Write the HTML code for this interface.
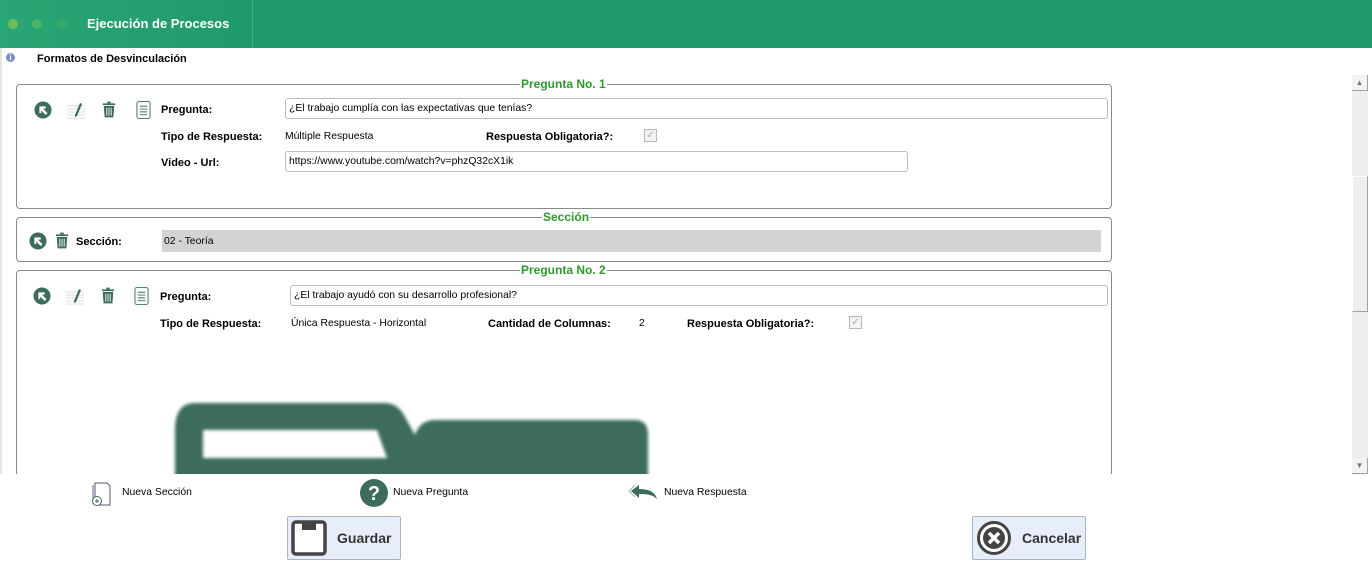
<!DOCTYPE html>
<html><head><meta charset="utf-8"><style>
*{margin:0;padding:0;box-sizing:border-box}
body{width:1372px;height:584px;background:#fff;font-family:"Liberation Sans",sans-serif;font-size:11px;color:#000;position:relative;overflow:hidden}
.a{position:absolute}
.n{font-size:10.4px}
.b{font-weight:bold}
.box{position:absolute;left:16px;width:1096px;border:1px solid #8a8a8a;border-radius:4px}
.leg{position:absolute;top:-8px;background:#fff;color:#2e9a2a;font-weight:bold;font-size:12px;padding:0 1px;line-height:14px}
.inp{position:absolute;border:1px solid #bdbdbd;border-radius:3px;height:21px;padding:4px 3px;font-size:10.4px;background:#fff}
.chk{position:absolute;width:13px;height:13px;border:1px solid #b8b8b8;background:#f2f2f2;color:#aaa;font-size:10px;line-height:11px;text-align:center}
.btn{position:absolute;border:1px solid #a9b3c4;border-radius:2px;background:#e7edf9;height:44px;font-size:14px;font-weight:bold;color:#333}
</style></head><body>
<div class="a" style="left:0;top:0;width:1372px;height:48px;background:#229a6c"></div>
<div class="a" style="left:0;top:0;width:252px;height:48px;background:linear-gradient(90deg,#2aa574,#209a6a)"></div>
<div class="a" style="left:252px;top:0;width:1px;height:48px;background:#3fb184"></div>
<div class="a" style="left:8px;top:19px;width:10px;height:10px;border-radius:50%;background:#6fbf58"></div>
<div class="a" style="left:32px;top:19px;width:10px;height:10px;border-radius:50%;background:#4db368"></div>
<div class="a" style="left:57px;top:19px;width:10px;height:10px;border-radius:50%;background:#36a86c"></div>
<div class="a b" style="left:87px;top:16px;color:#fff;font-size:13px">Ejecución de Procesos</div>
<div class="a" style="left:0;top:48px;width:2px;height:536px;background:#e6e6e6"></div>
<div class="a b" style="left:6px;top:53px;width:9px;height:9px;border-radius:50%;background:#7a8fd0;color:#fff;font-size:8px;line-height:9px;text-align:center">i</div>
<div class="a b" style="left:37px;top:53px">Formatos de Desvinculación</div>

<svg width="0" height="0" style="position:absolute"><defs>
<symbol id="go" viewBox="0 0 20 20"><circle cx="10" cy="10" r="9.5" fill="#3d6b5e"/><path d="M6 6h7v2.5h-3l5 5-2 2-5-5v3H6z" fill="#fff"/></symbol>
<symbol id="tr" viewBox="0 0 16 18"><rect x="1" y="2" width="14" height="2" fill="#3d6b5e"/><rect x="6" y="0" width="4" height="2" fill="#3d6b5e"/><path d="M2 5h12l-1 13H3z" fill="#3d6b5e"/><path d="M5.5 7v9M8 7v9M10.5 7v9" stroke="#fff" stroke-width="1"/></symbol>
<symbol id="ed" viewBox="0 0 20 20"><path d="M1 5h18M1 8h18M1 11h18M1 14h18M1 17h18" stroke="#ddd" stroke-width="1"/><path d="M14 2l2 1-5 12-2 1 0-2z" fill="#3d6b5e"/></symbol>
<symbol id="dc" viewBox="0 0 16 20"><rect x="1" y="1" width="14" height="18" rx="2" fill="#fff" stroke="#3d6b5e"/><path d="M4 6h8M4 9h8M4 12h8M4 15h8" stroke="#3d6b5e"/></symbol>
</defs></svg>

<div class="box" style="top:84px;height:125px">
<div class="leg" style="left:503px">Pregunta No. 1</div>
</div>
<svg class="a" style="left:34px;top:101px" width="18" height="18"><use href="#go"/></svg>
<svg class="a" style="left:66px;top:101px" width="20" height="20"><use href="#ed"/></svg>
<svg class="a" style="left:102px;top:101px" width="14" height="17"><use href="#tr"/></svg>
<svg class="a" style="left:136px;top:100px" width="15" height="20"><use href="#dc"/></svg>
<div class="a b" style="left:161px;top:104px">Pregunta:</div>
<div class="inp" style="left:285px;top:98px;width:823px">¿El trabajo cumplía con las expectativas que tenías?</div>
<div class="a b" style="left:161px;top:131px">Tipo de Respuesta:</div>
<div class="a n" style="left:285px;top:131px">Múltiple Respuesta</div>
<div class="a b" style="left:486px;top:131px">Respuesta Obligatoria?:</div>
<div class="chk" style="left:644px;top:129px">✓</div>
<div class="a b" style="left:161px;top:157px">Video - Url:</div>
<div class="inp" style="left:285px;top:151px;width:623px">https://www.youtube.com/watch?v=phzQ32cX1ik</div>

<div class="box" style="top:217px;height:45px">
<div class="leg" style="left:525px">Sección</div>
</div>
<svg class="a" style="left:29px;top:232px" width="18" height="18"><use href="#go"/></svg>
<svg class="a" style="left:55px;top:232px" width="14" height="17"><use href="#tr"/></svg>
<div class="a b" style="left:76px;top:236px">Sección:</div>
<div class="a n" style="left:162px;top:230px;width:939px;height:22px;background:#d3d3d3;padding:6px 2px">02 - Teoría</div>

<div class="box" style="top:270px;height:230px">
<div class="leg" style="left:503px">Pregunta No. 2</div>
</div>
<svg class="a" style="left:33px;top:287px" width="18" height="18"><use href="#go"/></svg>
<svg class="a" style="left:65px;top:287px" width="20" height="20"><use href="#ed"/></svg>
<svg class="a" style="left:101px;top:287px" width="14" height="17"><use href="#tr"/></svg>
<svg class="a" style="left:134px;top:286px" width="15" height="20"><use href="#dc"/></svg>
<div class="a b" style="left:160px;top:291px">Pregunta:</div>
<div class="inp" style="left:290px;top:285px;width:818px">¿El trabajo ayudó con su desarrollo profesional?</div>
<div class="a b" style="left:160px;top:318px">Tipo de Respuesta:</div>
<div class="a n" style="left:291px;top:318px">Única Respuesta - Horizontal</div>
<div class="a b" style="left:488px;top:318px">Cantidad de Columnas:</div>
<div class="a n" style="left:639px;top:318px">2</div>
<div class="a b" style="left:687px;top:318px">Respuesta Obligatoria?:</div>
<div class="chk" style="left:849px;top:316px">✓</div>

<svg class="a" style="left:170px;top:395px;filter:blur(1.5px)" width="490" height="90">
<path d="M5 35 Q5 8 25 8 H215 Q228 8 235 22 L245 40 Q250 25 265 25 H465 Q478 25 478 40 V90 H5Z" fill="#3d6b5e"/>
<path d="M33 35 H207 L217 63 H33Z" fill="#fff"/>
</svg>
<div class="a" style="left:0;top:474px;width:1352px;height:110px;background:#fff"></div>

<div class="a" style="left:1352px;top:75px;width:16px;height:400px;background:#efefef"></div>
<div class="a" style="left:1352px;top:75px;width:16px;height:16px;background:#f3f3f3;border-right:1px solid #9aa79a;border-bottom:1px solid #9aa79a;color:#777;font-size:8px;text-align:center;line-height:15px">▲</div>
<div class="a" style="left:1352px;top:176px;width:16px;height:136px;background:#efefef;border:1px solid #fff;border-right:1px solid #9aa79a;border-bottom:1px solid #9aa79a"></div>
<div class="a" style="left:1352px;top:458px;width:16px;height:16px;background:#f3f3f3;border-right:1px solid #9aa79a;border-bottom:1px solid #9aa79a;color:#777;font-size:8px;text-align:center;line-height:15px">▼</div>

<svg class="a" style="left:91px;top:480px" width="22" height="28"><path d="M4 3h12l3 3v19H4z" fill="#fff" stroke="#557" stroke-width="1"/><path d="M2 5v19" stroke="#667"/><circle cx="6" cy="21" r="4.5" fill="#fff" stroke="#3d6b5e"/><path d="M4 21h4M6 19v4" stroke="#3d6b5e"/></svg>
<div class="a n" style="left:122px;top:487px">Nueva Sección</div>
<svg class="a" style="left:359px;top:478px" width="30" height="30"><circle cx="15" cy="15" r="14" fill="#3d6b5e"/><text x="15" y="22" text-anchor="middle" fill="#fff" font-family="Liberation Sans" font-weight="bold" font-size="20">?</text></svg>
<div class="a n" style="left:393px;top:487px">Nueva Pregunta</div>
<svg class="a" style="left:629px;top:484px" width="30" height="16"><path d="M2 7l8-6v4c10 0 16 3 18 10-4-4-9-5-18-5v4z" fill="#3d6b5e"/><path d="M6 1L0 7l6 6" stroke="#9bb" fill="none"/></svg>
<div class="a n" style="left:664px;top:487px">Nueva Respuesta</div>

<div class="btn" style="left:287px;top:516px;width:114px">
<svg class="a" style="left:3px;top:3px" width="36" height="36"><rect x="2" y="2" width="32" height="32" rx="3" fill="#fff" stroke="#444" stroke-width="3.5"/><rect x="11" y="2" width="14" height="8" fill="#444"/></svg>
<span class="a" style="left:49px;top:13px">Guardar</span></div>
<div class="btn" style="left:972px;top:516px;width:114px">
<svg class="a" style="left:3px;top:3px" width="36" height="36"><circle cx="18" cy="18" r="15.5" fill="#fff" stroke="#444" stroke-width="3"/><circle cx="18" cy="18" r="11" fill="#444"/><path d="M13 13l10 10M23 13l-10 10" stroke="#fff" stroke-width="3.5"/></svg>
<span class="a" style="left:49px;top:13px">Cancelar</span></div>
</body></html>
